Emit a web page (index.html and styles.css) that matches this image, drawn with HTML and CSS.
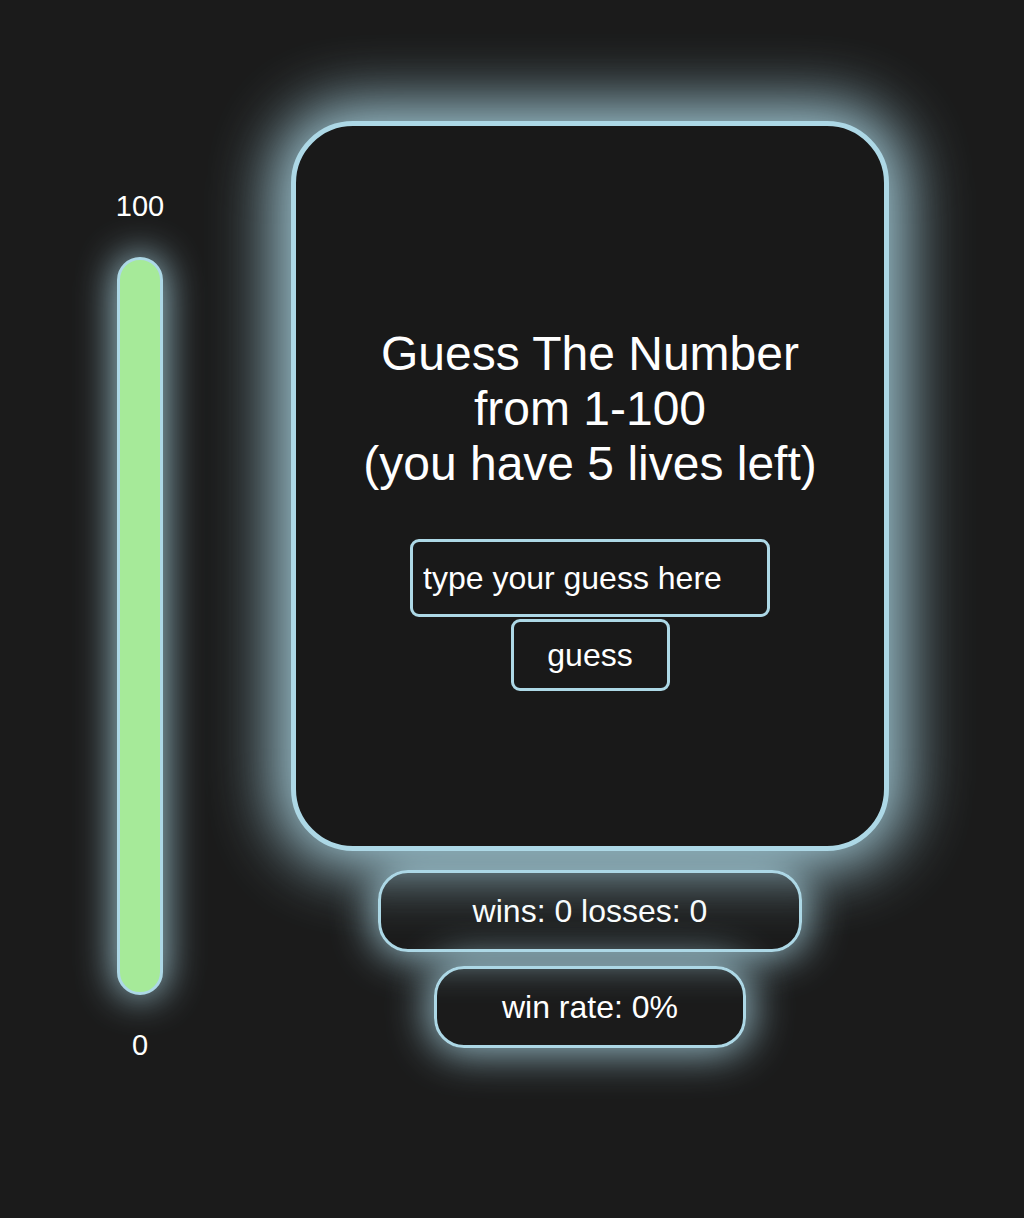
FILE: index.html
```html
<!DOCTYPE html>
<html>
<head>
<meta charset="utf-8">
<link rel="stylesheet" href="styles.css">
</head>
<body>
<div class="page">
  <div class="meter">
    <div class="meter-label">100</div>
    <div class="bar"><div class="bar-fill"></div></div>
    <div class="meter-label">0</div>
  </div>
  <div class="game">
    <div class="card">
      <h1 class="title">Guess The Number<br>from 1-100<br>(you have 5 lives left)</h1>
      <input class="guess-input" type="text" placeholder="type your guess here">
      <button class="guess-btn">guess</button>
    </div>
    <div class="stat stat-wide">wins: 0 losses: 0</div>
    <div class="stat stat-narrow">win rate: 0%</div>
  </div>
</div>
</body>
</html>
```
FILE: styles.css
```css
html, body {
  margin: 0;
  padding: 0;
  background: #1b1b1b;
  color: #ffffff;
  font-family: "Liberation Sans", Arial, sans-serif;
}

.page {
  display: flex;
  align-items: flex-start;
  padding-top: 121px;
  height: 1097px;
}

.meter {
  width: 280px;
  display: flex;
  flex-direction: column;
  align-items: center;
  margin-top: 69px;
}

.meter-label {
  font-size: 29px;
  line-height: 33px;
}

.bar {
  margin: 34px 0 34px;
  width: 40px;
  height: 732px;
  border: 3px solid #add8e6;
  border-radius: 23px;
  background: #a6ea99;
  box-shadow: 0 0 38px 2px rgba(173, 216, 230, 0.9);
  overflow: hidden;
}

.bar-fill {
  height: 100%;
}

.game {
  margin-left: 11px;
  width: 598px;
  display: flex;
  flex-direction: column;
  align-items: center;
}

.card {
  position: relative;
  z-index: 1;
  box-sizing: border-box;
  width: 598px;
  height: 730px;
  border: 5px solid #add8e6;
  border-radius: 62px;
  background: #191919;
  box-shadow: 0 0 64px 16px rgba(173, 216, 230, 0.95);
  display: flex;
  flex-direction: column;
  align-items: center;
  padding-top: 200px;
}

.title {
  margin: 0 0 48px;
  font-size: 48px;
  font-weight: normal;
  line-height: 55px;
  text-align: center;
}

.guess-input {
  box-sizing: border-box;
  width: 360px;
  height: 78px;
  border: 3px solid #add8e6;
  border-radius: 9px;
  background: #191919;
  color: #ffffff;
  font-family: "Liberation Sans", Arial, sans-serif;
  font-size: 32px;
  padding: 0 10px;
  outline: none;
}

.guess-input::placeholder {
  color: #ffffff;
  opacity: 1;
}

.guess-btn {
  box-sizing: border-box;
  margin-top: 2px;
  width: 159px;
  height: 72px;
  border: 3px solid #add8e6;
  border-radius: 9px;
  background: #191919;
  color: #ffffff;
  font-family: "Liberation Sans", Arial, sans-serif;
  font-size: 32px;
  padding: 0;
}

.stat {
  box-sizing: border-box;
  height: 82px;
  border: 3px solid #add8e6;
  border-radius: 30px;
  background: transparent;
  box-shadow: 0 0 42px 5px rgba(173, 216, 230, 0.85);
  display: flex;
  align-items: center;
  justify-content: center;
  font-size: 32px;
}

.stat-wide {
  margin-top: 19px;
  width: 424px;
}

.stat-narrow {
  margin-top: 14px;
  width: 312px;
}
```
